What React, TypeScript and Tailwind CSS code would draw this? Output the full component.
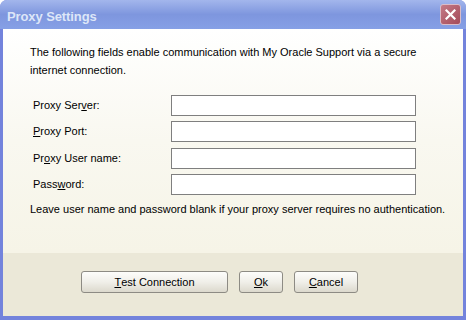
import React from "react";

const font = { fontFamily: '"Liberation Sans", Arial, sans-serif' };

function Field({ label, className }: { label: React.ReactNode; className: string }) {
  return (
    <div className={`flex items-center h-[21px] ${className}`}>
      <span className="w-[168px] pl-[30px] text-[11px] text-black leading-none">{label}</span>
      <div className="w-[245px] h-[21px] border border-[#7f7f7f] bg-white" />
    </div>
  );
}

function Button({ children, width }: { children: React.ReactNode; width: string }) {
  return (
    <div
      className={`${width} h-[22px] rounded-[3px] border border-[#8d8b84] bg-gradient-to-b from-[#fdfdfb] via-[#f0efe9] to-[#dcd9cd] flex items-center justify-center text-[11px] text-black`}
    >
      {children}
    </div>
  );
}

export default function App() {
  return (
    <div className="w-[466px] h-[320px] flex flex-col bg-[#7383dc] rounded-t-[7px] overflow-hidden" style={font}>
      {/* title bar */}
      <div className="h-[29px] flex items-center justify-between pl-[7px] pr-[5px] bg-gradient-to-b from-[#a3b6ec] via-[#7e96de] to-[#86a0e6]">
        <span className="pt-[4px] text-[13px] font-bold text-[#dde6f8] tracking-[-0.1px]">
          Proxy Settings
        </span>
        <div className="w-[21px] h-[21px] rounded-[3px] border border-[#d9bcc8] bg-gradient-to-br from-[#c47a86] to-[#a44a5a] flex items-center justify-center">
          <svg width="11" height="11" viewBox="0 0 11 11">
            <path d="M1.5 1.5 L9.5 9.5 M9.5 1.5 L1.5 9.5" stroke="#fff" strokeWidth="2.2" strokeLinecap="square" />
          </svg>
        </div>
      </div>

      {/* body */}
      <div className="mx-[3px] flex-1 flex flex-col">
        <div className="h-[224px] bg-gradient-to-b from-[#ffffff] via-[#f9f8f0] to-[#f6f4e7] pl-[27px] pt-[14px]">
          <p className="text-[11px] leading-[18px] text-black">
            The following fields enable communication with My Oracle Support via a secure
            <br />
            internet connection.
          </p>
          <div className="-ml-[27px]">
            <Field className="mt-[16px]" label={<>Proxy Ser<u>v</u>er:</>} />
            <Field className="mt-[5px]" label={<><u>P</u>roxy Port:</>} />
            <Field className="mt-[6px]" label={<>Pr<u>o</u>xy User name:</>} />
            <Field className="mt-[5px]" label={<>Pass<u>w</u>ord:</>} />
          </div>
          <p className="mt-[5px] text-[11px] leading-[18px] text-black">
            Leave user name and password blank if your proxy server requires no authentication.
          </p>
        </div>
        <div className="h-[63px] bg-[#ebe8d8] flex items-start pt-[18px] pl-[78px] gap-[11px]">
          <Button width="w-[147px]">
            <u>T</u>est Connection
          </Button>
          <Button width="w-[44px]">
            <u>O</u>k
          </Button>
          <Button width="w-[64px]">
            <u>C</u>ancel
          </Button>
        </div>
      </div>
      <div className="h-[4px]" />
    </div>
  );
}
